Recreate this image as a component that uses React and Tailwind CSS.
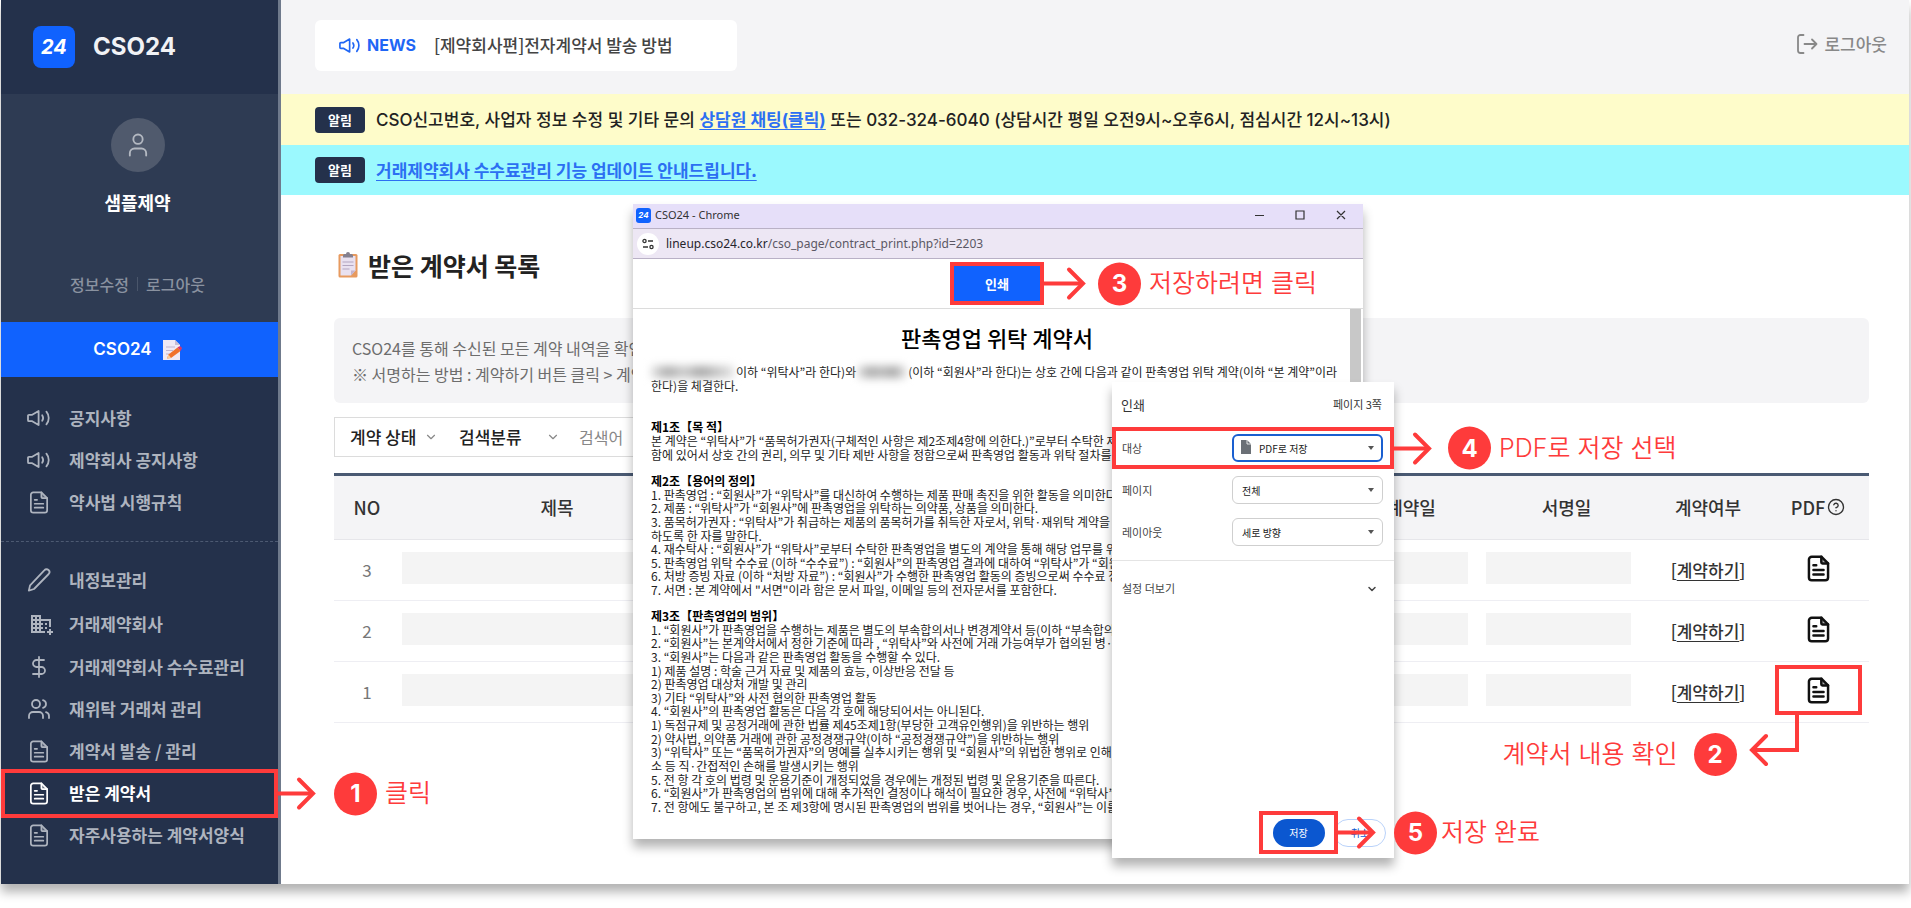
import { MdDomainAdd } from "react-icons/md";
import { DollarSign, Users, User, ChevronDown, CircleHelp } from "lucide-react";

const HANGUL = "font-['Noto_Sans_CJK_KR',sans-serif]";

function SpeakerIcon({ className }) {
  return (
    <svg viewBox="0 0 24 16" className={className} fill="none" stroke="currentColor" strokeWidth="1.8" strokeLinejoin="round" strokeLinecap="round" aria-hidden="true">
      <path d="M2 4.8h3.2L11.6 1v14L5.2 11.2H2a1 1 0 0 1-1-1V5.8a1 1 0 0 1 1-1z" />
      <path d="M15.2 5.2a5 5 0 0 1 0 5.6" />
      <path d="M19.4 1.6a10 10 0 0 1 0 12.8" />
    </svg>
  );
}

function PageIcon({ className, strong }) {
  return (
    <svg viewBox="0 0 20 24" className={className} fill="none" stroke="currentColor" strokeWidth={strong ? 2.2 : 1.8} strokeLinejoin="round" strokeLinecap="round" aria-hidden="true">
      <path d="M12.5 1.5H4A2.5 2.5 0 0 0 1.5 4v16A2.5 2.5 0 0 0 4 22.5h12a2.5 2.5 0 0 0 2.5-2.5V7.5z" />
      <path d="M12.5 1.5v5a1 1 0 0 0 1 1h5" fill="currentColor" fillOpacity="0.35" />
      <path d="M5.5 9.2h2.5M5.5 13.3h9M5.5 17.4h9" />
    </svg>
  );
}

function PencilIcon({ className }) {
  return (
    <svg viewBox="0 0 24 24" className={className} fill="none" stroke="currentColor" strokeWidth="1.8" strokeLinejoin="round" strokeLinecap="round" aria-hidden="true">
      <path d="M17.5 2.2a2.8 2.8 0 0 1 4.2 3.8L7 21l-5.2 1.6 1.3-5.3z" />
    </svg>
  );
}

function LogoutIcon({ className }) {
  return (
    <svg viewBox="0 0 22 20" className={className} fill="none" stroke="currentColor" strokeWidth="1.8" strokeLinejoin="round" strokeLinecap="round" aria-hidden="true">
      <path d="M7.5 1H4.5A2.5 2.5 0 0 0 2 3.5v13A2.5 2.5 0 0 0 4.5 19h3" />
      <path d="M8.5 10h12M16 5.5 20.5 10 16 14.5" />
    </svg>
  );
}

function ClipboardIcon({ className }) {
  return (
    <svg viewBox="0 0 20 26" className={className} aria-hidden="true">
      <rect x="0.5" y="2" width="19" height="23.5" rx="1.5" fill="#e79a5f" />
      <path d="M2.5 4h15v14.5L13 23.5H2.5z" fill="#e9e1f0" />
      <path d="M17.5 18.5H13v5z" fill="#c3b4cf" />
      <path d="M5 5.5V3.5A1.5 1.5 0 0 1 6.5 2H8a2 2 0 0 1 4 0h1.5A1.5 1.5 0 0 1 15 3.5v2z" fill="#85808f" />
      <path d="M4.5 10h11M4.5 13.5h11M4.5 17h7" stroke="#b3a5c0" strokeWidth="1.1" />
    </svg>
  );
}

function MemoIcon({ className }) {
  return (
    <svg viewBox="0 0 20 22" className={className} aria-hidden="true">
      <path d="M1 1h12l5 5v15H1z" fill="#efe9f5" />
      <path d="M13 1v5h5z" fill="#c8bcd4" />
      <path d="M4 8h9M4 11.5h7M4 15h4" stroke="#c2b6cf" strokeWidth="1.1" />
      <path d="M5 19.5 6.5 15.5 15.5 8.5 18.5 12 9 19z" fill="#f0712c" />
      <path d="M15.5 8.5 17 7.5a1.5 1.5 0 0 1 2 .3l.6.8a1.5 1.5 0 0 1-.3 2L18.5 12z" fill="#d9376a" />
      <path d="M5 19.5 6.5 15.5 9 19z" fill="#f7cf9a" />
    </svg>
  );
}

function ArrowRight({ className }) {
  return (
    <svg viewBox="0 0 42 34" className={className} fill="none" stroke="currentColor" strokeWidth="4" aria-hidden="true">
      <path d="M0 17h38" />
      <path d="M25 3l14 14-14 14" strokeLinecap="round" strokeLinejoin="miter" />
    </svg>
  );
}

function Badge({ children }) {
  return (
    <span className="flex size-[43px] shrink-0 items-center justify-center rounded-full bg-[#fe3b3b] font-['Inter',sans-serif] text-2xl font-bold text-white">
      {children}
    </span>
  );
}

const CALLOUT_TEXT = "font-['Inter','Noto_Sans_CJK_KR',sans-serif] text-[25px] font-[350]";

function Callout({ number, children, arrowGap = "mr-3", gap = "gap-2" }) {
  return (
    <div className="pointer-events-none absolute top-1/2 left-full z-40 flex -translate-y-1/2 items-center whitespace-nowrap text-[#fe3b3b]">
      <ArrowRight className={"h-[34px] w-[42px] " + arrowGap} />
      <div className={"flex items-center " + gap}>
        <Badge>{number}</Badge>
        <span className={CALLOUT_TEXT}>{children}</span>
      </div>
    </div>
  );
}

function MenuItem({ icon, children, active, tall }) {
  return (
    <li className={"relative flex items-center " + (tall ? "h-[45px] " : "h-[42px] ") + (active ? "text-white" : "text-[#aeb4bf]")}>
      <a href="#menu" className="flex w-full items-center pl-[26px] text-[17px] font-bold">
        <span className="flex w-[42px] shrink-0">{icon}</span>
        {children}
      </a>
      {active && (
        <div className="absolute inset-x-0 -top-[3px] -bottom-1 border-4 border-[#fe3b3b]">
          <Callout number="1" arrowGap="mr-[18px]">클릭</Callout>
        </div>
      )}
    </li>
  );
}

function Sidebar() {
  return (
    <aside className="flex w-[280px] shrink-0 flex-col border-r-[3px] border-[#6f7a8c] bg-[#24314b]">
      <div className="flex h-[94px] items-center pl-8">
        <span className="flex size-[42px] items-center justify-center rounded-lg bg-[#1062fe] font-['Inter',sans-serif] text-xl font-bold text-white italic">24</span>
        <span className="ml-[18px] font-['Inter',sans-serif] text-2xl font-bold text-[#f1f2f5]">CSO24</span>
      </div>
      <div className="flex h-[228px] flex-col items-center bg-[#2e3b53] pt-6 pr-1">
        <span className="flex size-[54px] items-center justify-center rounded-full bg-[#505a6d] text-[#b3b8c1]">
          <User className="size-7" strokeWidth={1.6} />
        </span>
        <strong className="mt-4 text-lg font-bold text-white">샘플제약</strong>
        <div className="mt-14 flex items-center gap-2 text-base font-medium text-[#8a92a0]">
          <a href="#profile">정보수정</a>
          <span className="h-3.5 w-px bg-[#4a566b]" />
          <a href="#logout">로그아웃</a>
        </div>
      </div>
      <a href="#cso24" className="flex h-[55px] items-center justify-center gap-2.5 bg-[#1062fe] pr-1 font-['Inter',sans-serif] text-[17px] font-semibold text-white">
        CSO24
        <MemoIcon className="h-[22px] w-5" />
      </a>
      <nav>
        <ul className="pt-5 pb-[18px]">
          <MenuItem icon={<SpeakerIcon className="h-4 w-6" />}>공지사항</MenuItem>
          <MenuItem icon={<SpeakerIcon className="h-4 w-6" />}>제약회사 공지사항</MenuItem>
          <MenuItem icon={<PageIcon className="ml-0.5 h-[23px] w-5" />}>약사법 시행규칙</MenuItem>
        </ul>
        <ul className="border-t border-dashed border-[#4d5a72] pt-[17px] pb-7">
          <MenuItem icon={<PencilIcon className="size-6" />}>내정보관리</MenuItem>
          <MenuItem tall icon={<MdDomainAdd className="ml-0.5 size-6" />}>거래제약회사</MenuItem>
          <MenuItem icon={<DollarSign className="size-6" strokeWidth={1.8} />}>거래제약회사 수수료관리</MenuItem>
          <MenuItem icon={<Users className="size-6" strokeWidth={1.8} />}>재위탁 거래처 관리</MenuItem>
          <MenuItem icon={<PageIcon className="ml-0.5 h-[23px] w-5" />}>계약서 발송 / 관리</MenuItem>
          <MenuItem active icon={<PageIcon className="ml-0.5 h-[23px] w-5" />}>받은 계약서</MenuItem>
          <MenuItem icon={<PageIcon className="ml-0.5 h-[23px] w-5" />}>자주사용하는 계약서양식</MenuItem>
        </ul>
      </nav>
    </aside>
  );
}

function NoticeTag() {
  return <span className="flex h-[26px] w-[50px] shrink-0 items-center justify-center rounded-sm bg-[#24314b] text-[13px] font-bold text-white">알림</span>;
}

function Block() {
  return <div className="h-8 bg-[#f4f4f4]" />;
}

function ContractTable() {
  const th = "h-[65px] border-b border-[#e6e6ea] p-0 pb-0.5 text-center font-medium";
  const td = "h-[61px] border-b border-[#eeeef3] p-0 text-center align-middle";
  return (
    <table className="mt-4 w-full table-fixed border-collapse border-t-[3px] border-[#4a5a73] text-lg text-[#333]">
      <colgroup>
        <col className="w-[68px]" />
        <col className="w-[310px]" />
        <col />
        <col className="w-[150px]" />
        <col className="w-[161px]" />
        <col className="w-[122px]" />
        <col className="w-[100px]" />
      </colgroup>
      <thead className="bg-[#f4f4f6]">
        <tr>
          <th className={th + " pr-0.5"}>NO</th>
          <th className={th}>제목</th>
          <th className={th}></th>
          <th className={th}>계약일</th>
          <th className={th}>서명일</th>
          <th className={th}>계약여부</th>
          <th className={th + " pr-0.5"}>
            <span className="flex items-center justify-center gap-0.5">
              PDF
              <CircleHelp className="size-[18px]" strokeWidth={1.8} />
            </span>
          </th>
        </tr>
      </thead>
      <tbody>
        {["3", "2", "1"].map((no) => (
          <tr key={no}>
            <td className={td + " pr-0.5 text-[17px] text-[#777]"}>{no}</td>
            <td className={td + " pb-1"}><Block /></td>
            <td className={td + " pb-1"}><Block /></td>
            <td className={td + " pr-[18px] pb-1"}><Block /></td>
            <td className={td + " pr-4 pb-1"}><Block /></td>
            <td className={td + " text-[17px] font-medium"}>
              [<a href="#sign" className="underline underline-offset-3">계약하기</a>]
            </td>
            <td className={td + " pr-0.5 pb-1 text-[#111]"}>
              <button type="button" aria-label="PDF" className="relative inline-flex h-[50px] w-[87px] items-center justify-center align-middle">
                <PageIcon strong className="h-[27px] w-[23px]" />
                {no === "1" && (
                  <span className="pointer-events-none absolute inset-0 border-4 border-[#fe3b3b]">
                    <span className="absolute top-[64px] right-[121px] flex items-center gap-4 whitespace-nowrap text-[#fe3b3b]">
                      <span className={CALLOUT_TEXT}>계약서 내용 확인</span>
                      <Badge>2</Badge>
                    </span>
                    <svg viewBox="0 0 50 58" className="absolute top-[41px] right-[59px] h-[58px] w-[50px]" fill="none" stroke="#fe3b3b" strokeWidth="4" aria-hidden="true">
                      <path d="M48 3v37H4" />
                      <path d="M17 26 3 40l14 14" strokeLinecap="round" />
                    </svg>
                  </span>
                )}
              </button>
            </td>
          </tr>
        ))}
      </tbody>
    </table>
  );
}

const ARTICLES = [
  {
    height: "h-[41px]",
    title: "제1조【목 적】",
    lines: [
      "본 계약은 “위탁사”가 “품목허가권자(구체적인 사항은 제2조제4항에 의한다.)”로부터 수탁한 제품에",
      "함에 있어서 상호 간의 권리, 의무 및 기타 제반 사항을 정함으로써 판촉영업 활동과 위탁 절차를 규정",
    ],
  },
  {
    height: "h-[122px]",
    title: "제2조【용어의 정의】",
    lines: [
      "1. 판촉영업 : “회원사”가 “위탁사”를 대신하여 수행하는 제품 판매 촉진을 위한 활동을 의미한다.",
      "2. 제품 : “위탁사”가 “회원사”에 판촉영업을 위탁하는 의약품, 상품을 의미한다.",
      "3. 품목허가권자 : “위탁사”가 취급하는 제품의 품목허가를 취득한 자로서, 위탁·재위탁 계약을 통해",
      "하도록 한 자를 말한다.",
      "4. 재수탁사 : “회원사”가 “위탁사”로부터 수탁한 판촉영업을 별도의 계약을 통해 해당 업무를 위탁",
      "5. 판촉영업 위탁 수수료 (이하 “수수료”) : “회원사”의 판촉영업 결과에 대하여 “위탁사”가 “회원사",
      "6. 처방 증빙 자료 (이하 “처방 자료”) : “회원사”가 수행한 판촉영업 활동의 증빙으로써 수수료 정산",
      "7. 서면 : 본 계약에서 \"서면\"이라 함은 문서 파일, 이메일 등의 전자문서를 포함한다.",
    ],
  },
  {
    height: "h-[204px]",
    title: "제3조【판촉영업의 범위】",
    lines: [
      "1. “회원사”가 판촉영업을 수행하는 제품은 별도의 부속합의서나 변경계약서 등(이하 “부속합의서",
      "2. “회원사”는 본계약서에서 정한 기준에 따라 , “위탁사”와 사전에 거래 가능여부가 협의된 병·의원",
      "3. “회원사”는 다음과 같은 판촉영업 활동을 수행할 수 있다.",
      "1) 제품 설명 : 학술 근거 자료 및 제품의 효능, 이상반응 전달 등",
      "2) 판촉영업 대상처 개발 및 관리",
      "3) 기타 “위탁사”와 사전 협의한 판촉영업 활동",
      "4. “회원사”의 판촉영업 활동은 다음 각 호에 해당되어서는 아니된다.",
      "1) 독점규제 및 공정거래에 관한 법률 제45조제1항(부당한 고객유인행위)을 위반하는 행위",
      "2) 약사법, 의약품 거래에 관한 공정경쟁규약(이하 “공정경쟁규약”)을 위반하는 행위",
      "3) “위탁사” 또는 “품목허가권자”의 명예를 실추시키는 행위 및 “회원사”의 위법한 행위로 인해 “위탁",
      "소 등 직·간접적인 손해를 발생시키는 행위",
      "5. 전 항 각 호의 법령 및 운용기준이 개정되었을 경우에는 개정된 법령 및 운용기준을 따른다.",
      "6. “회원사”가 판촉영업의 범위에 대해 추가적인 결정이나 해석이 필요한 경우, 사전에 “위탁사”와",
      "7. 전 항에도 불구하고, 본 조 제3항에 명시된 판촉영업의 범위를 벗어나는 경우, “회원사”는 이를",
    ],
  },
];

function BrowserWindow() {
  return (
    <section className="absolute top-[204px] left-[632px] z-10 flex h-[635px] w-[730px] flex-col bg-white shadow-[0_8px_10px_rgba(0,0,0,0.3)]">
      <div className="flex h-6 items-center bg-[#e6dff9] pr-4 pb-0.5 pl-[3px] text-[#333]">
        <span className="flex size-[15px] items-center justify-center rounded-[3px] bg-[#1062fe] font-['Inter',sans-serif] text-[8px] font-bold text-white italic">24</span>
        <span className="ml-1 font-['Noto_Sans',sans-serif] text-[11px]">CSO24 - Chrome</span>
        <svg viewBox="0 0 94 12" className="ml-auto h-3 w-[94px]" fill="none" stroke="#333" strokeWidth="1.2" aria-hidden="true">
          <path d="M2 6.5h9M43 2h8v8h-8zM84 2l8 8M92 2l-8 8" />
        </svg>
      </div>
      <div className="flex h-[31px] items-center border-y border-[#b9b1c6] bg-[#ede7f4] pl-1">
        <span className="flex size-[22px] items-center justify-center rounded-full bg-white">
          <svg viewBox="0 0 12 12" className="size-3" fill="none" stroke="#333" strokeWidth="1.3" aria-hidden="true">
            <circle cx="2.5" cy="3" r="1.6" />
            <path d="M6 3h5M1 9h5" />
            <circle cx="9.5" cy="9" r="1.6" />
          </svg>
        </span>
        <span className="ml-[7px] font-['Noto_Sans',sans-serif] text-xs text-[#5b5864]">
          <span className="text-[#26242c]">lineup.cso24.co.kr</span>/cso_page/contract_print.php?id=2203
        </span>
      </div>
      <div className="relative flex h-[50px] shrink-0 justify-center border-b border-[#dcdcdc] pr-0.5">
        <div className="relative mt-[3px] h-[43px] w-[94px]">
          <button type="button" className="size-full border-4 border-[#fe3b3b] bg-[#1062fe] text-[13px] font-bold text-white">인쇄</button>
          <Callout number="3">저장하려면 클릭</Callout>
        </div>
      </div>
      <div className="relative min-h-0 flex-1 overflow-hidden pr-5 pl-[18px] text-xs leading-[13px] whitespace-nowrap text-[#222]">
        <h2 className="mt-3 text-center text-[22px] leading-8 font-medium text-black">판촉영업 위탁 계약서</h2>
        <div className="mt-3 flex items-center">
          <span className="mr-0.5 h-3 w-[83px] bg-[linear-gradient(90deg,#e4e4e4,#aaa,#ccc,#a5a5a5,#c4c4c4,#e4e4e4)] blur-xs" />
          이하 “위탁사”라 한다)와
          <span className="mx-0.5 h-3 w-12 bg-[linear-gradient(90deg,#ddd,#aaa,#bbb,#a5a5a5,#e4e4e4)] blur-xs" />
          (이하 “회원사”라 한다)는 상호 간에 다음과 같이 판촉영업 위탁 계약(이하 “본 계약”이라
        </div>
        <p className="mt-px">한다)을 체결한다.</p>
        <div className="mt-7 flex flex-col gap-[13px]">
          {ARTICLES.map((article) => (
            <div key={article.title} className={"flex flex-col justify-between " + article.height}>
              <h3 className="font-bold text-black">{article.title}</h3>
              {article.lines.map((line) => (
                <p key={line}>{line}</p>
              ))}
            </div>
          ))}
        </div>
        <div className="absolute top-0 right-0.5 h-[300px] w-[11px] bg-[#c8c8c8]" />
      </div>
    </section>
  );
}

function Caret() {
  return (
    <svg viewBox="0 0 6 4" className="pointer-events-none absolute top-1/2 right-[9px] h-1 w-1.5 -translate-y-1/2" aria-hidden="true">
      <path d="M0 0h6L3 4z" fill="#555" />
    </svg>
  );
}

function PrintField({ id, label, value, focused }) {
  return (
    <div className="relative flex h-[42px] items-center justify-between pr-[11px] pl-2.5">
      <label htmlFor={id} className="text-[11px] text-[#444]">{label}</label>
      <div className="relative">
        <select
          id={id}
          className={"block h-7 w-[151px] appearance-none rounded-md bg-white text-[10px] text-[#222] outline-none " + (focused ? "border-2 border-[#1a5fd0] pl-[25px]" : "border border-[#cfcfcf] pl-[9px]")}
        >
          <option>{value}</option>
        </select>
        {focused && (
          <svg viewBox="0 0 12 14" className="pointer-events-none absolute top-1.5 left-2 h-3.5 w-3" aria-hidden="true">
            <path d="M1 0h6l4 4v10H1z" fill="#6b7076" />
            <path d="M7 0v4h4" fill="none" stroke="#fff" strokeWidth="0.8" />
          </svg>
        )}
        <Caret />
      </div>
      {focused && (
        <div className="pointer-events-none absolute inset-0 border-4 border-[#fe3b3b]">
          <Callout number="4" arrowGap="mr-4">PDF로 저장 선택</Callout>
        </div>
      )}
    </div>
  );
}

function PrintDialog() {
  return (
    <section className="absolute top-[382px] left-[1111px] z-20 flex h-[476px] w-[282px] flex-col bg-white shadow-[0_8px_10px_rgba(0,0,0,0.3)]">
      <div className="flex h-[45px] items-center justify-between pr-3 pl-[9px] text-[#333]">
        <h2 className="text-[13px]">인쇄</h2>
        <span className="text-[11px]">페이지 3쪽</span>
      </div>
      <PrintField id="target" label="대상" value="PDF로 저장" focused />
      <PrintField id="pages" label="페이지" value="전체" />
      <PrintField id="layout" label="레이아웃" value="세로 방향" />
      <button type="button" className="mt-[7px] flex h-14 items-center justify-between border-t border-[#e4e4e4] pr-4 pl-2.5 text-[11px] text-[#444]">
        설정 더보기
        <ChevronDown className="size-3" strokeWidth={3} />
      </button>
      <div className="mt-auto flex items-center gap-[7px] pr-[11px] pb-1 pl-[147px]">
        <div className="relative -mr-[11px] flex h-[43px] w-[79px] shrink-0 items-center justify-center border-4 border-[#fe3b3b]">
          <button type="button" className="h-7 w-[52px] rounded-full bg-[#0b57d0] text-[10px] text-white">저장</button>
          <Callout number="5" arrowGap="mr-[18px]" gap="gap-1">저장 완료</Callout>
        </div>
        <button type="button" className="h-7 w-[52px] shrink-0 rounded-full border border-[#b9d2fa] text-[10px] text-[#0b57d0]">취소</button>
      </div>
    </section>
  );
}

export default function App() {
  return (
    <div className={"min-h-screen bg-white pr-0.5 pb-6 pl-px " + HANGUL}>
      <div className="relative flex bg-white shadow-[0_8px_10px_rgba(0,0,0,0.3)]">
        <Sidebar />
        <div className="min-w-0 flex-1">
          <header className="flex h-[94px] items-center justify-between bg-[#f4f4f6] pr-[22px] pl-[34px]">
            <div className="-mt-1 flex h-[51px] w-[422px] items-center rounded-md bg-white pl-6">
              <SpeakerIcon className="h-[15px] w-[22px] text-[#1f66f5]" />
              <strong className="ml-1.5 font-['Inter',sans-serif] text-base font-bold text-[#1f66f5]">NEWS</strong>
              <a href="#news" className="ml-[18px] text-[17px] font-medium text-[#444]">[제약회사편]전자계약서 발송 방법</a>
            </div>
            <a href="#logout" className="-mt-1.5 flex items-center gap-1.5 text-[17px] font-medium text-[#888]">
              <LogoutIcon className="h-5 w-[22px]" />
              로그아웃
            </a>
          </header>
          <div className="flex h-[51px] items-center gap-[11px] bg-[#fefcca] pl-[34px] text-[17px] font-medium text-[#222]">
            <NoticeTag />
            <p className="pt-0.5 font-['Inter','Noto_Sans_CJK_KR',sans-serif]">
              CSO신고번호, 사업자 정보 수정 및 기타 문의{" "}
              <a href="#chat" className="font-bold text-[#2c6ff2] underline underline-offset-3">상담원 채팅(클릭)</a>{" "}
              또는 032-324-6040 (상담시간 평일 오전9시~오후6시, 점심시간 12시~13시)
            </p>
          </div>
          <div className="flex h-[50px] items-center gap-[11px] bg-[#9bf9fe] pl-[34px] text-[17px]">
            <NoticeTag />
            <a href="#update" className="font-bold text-[#2c6ff2] underline underline-offset-3">거래제약회사 수수료관리 기능 업데이트 안내드립니다.</a>
          </div>
          <main className="pt-[52px] pr-10 pl-[53px]">
            <h1 className="flex items-center gap-2.5 pl-1 text-[25px] leading-9 font-bold text-[#222]">
              <ClipboardIcon className="h-[26px] w-5" />
              받은 계약서 목록
            </h1>
            <div className="mt-[35px] rounded-md bg-[#f4f4f6] px-[18px] pt-[17px] pb-4 text-base leading-[26px] text-[#6d6d6d]">
              <p className="w-fit">CSO24를 통해 수신된 모든 계약 내역을 확인</p>
              <p className="w-fit">※ 서명하는 방법 : 계약하기 버튼 클릭 &gt; 계약서</p>
            </div>
            <form className="mt-3.5 flex h-10 w-[800px] items-center border border-[#dcdcdc] pl-[15px] text-[17px] font-medium text-[#222]">
              <label className="relative flex items-center">
                <select aria-label="계약 상태" className="w-[109px] appearance-none bg-transparent outline-none">
                  <option>계약 상태</option>
                </select>
                <ChevronDown className="pointer-events-none absolute right-[21px] size-3.5 text-[#888]" strokeWidth={2} />
              </label>
              <label className="relative flex items-center">
                <select aria-label="검색분류" className="w-[120px] appearance-none bg-transparent outline-none">
                  <option>검색분류</option>
                </select>
                <ChevronDown className="pointer-events-none absolute right-[19px] size-3.5 text-[#888]" strokeWidth={2} />
              </label>
              <input aria-label="검색어" placeholder="검색어" className="w-16 text-base font-normal outline-none placeholder:text-[#888]" />
            </form>
            <ContractTable />
          </main>
        </div>
        <BrowserWindow />
        <PrintDialog />
      </div>
    </div>
  );
}
